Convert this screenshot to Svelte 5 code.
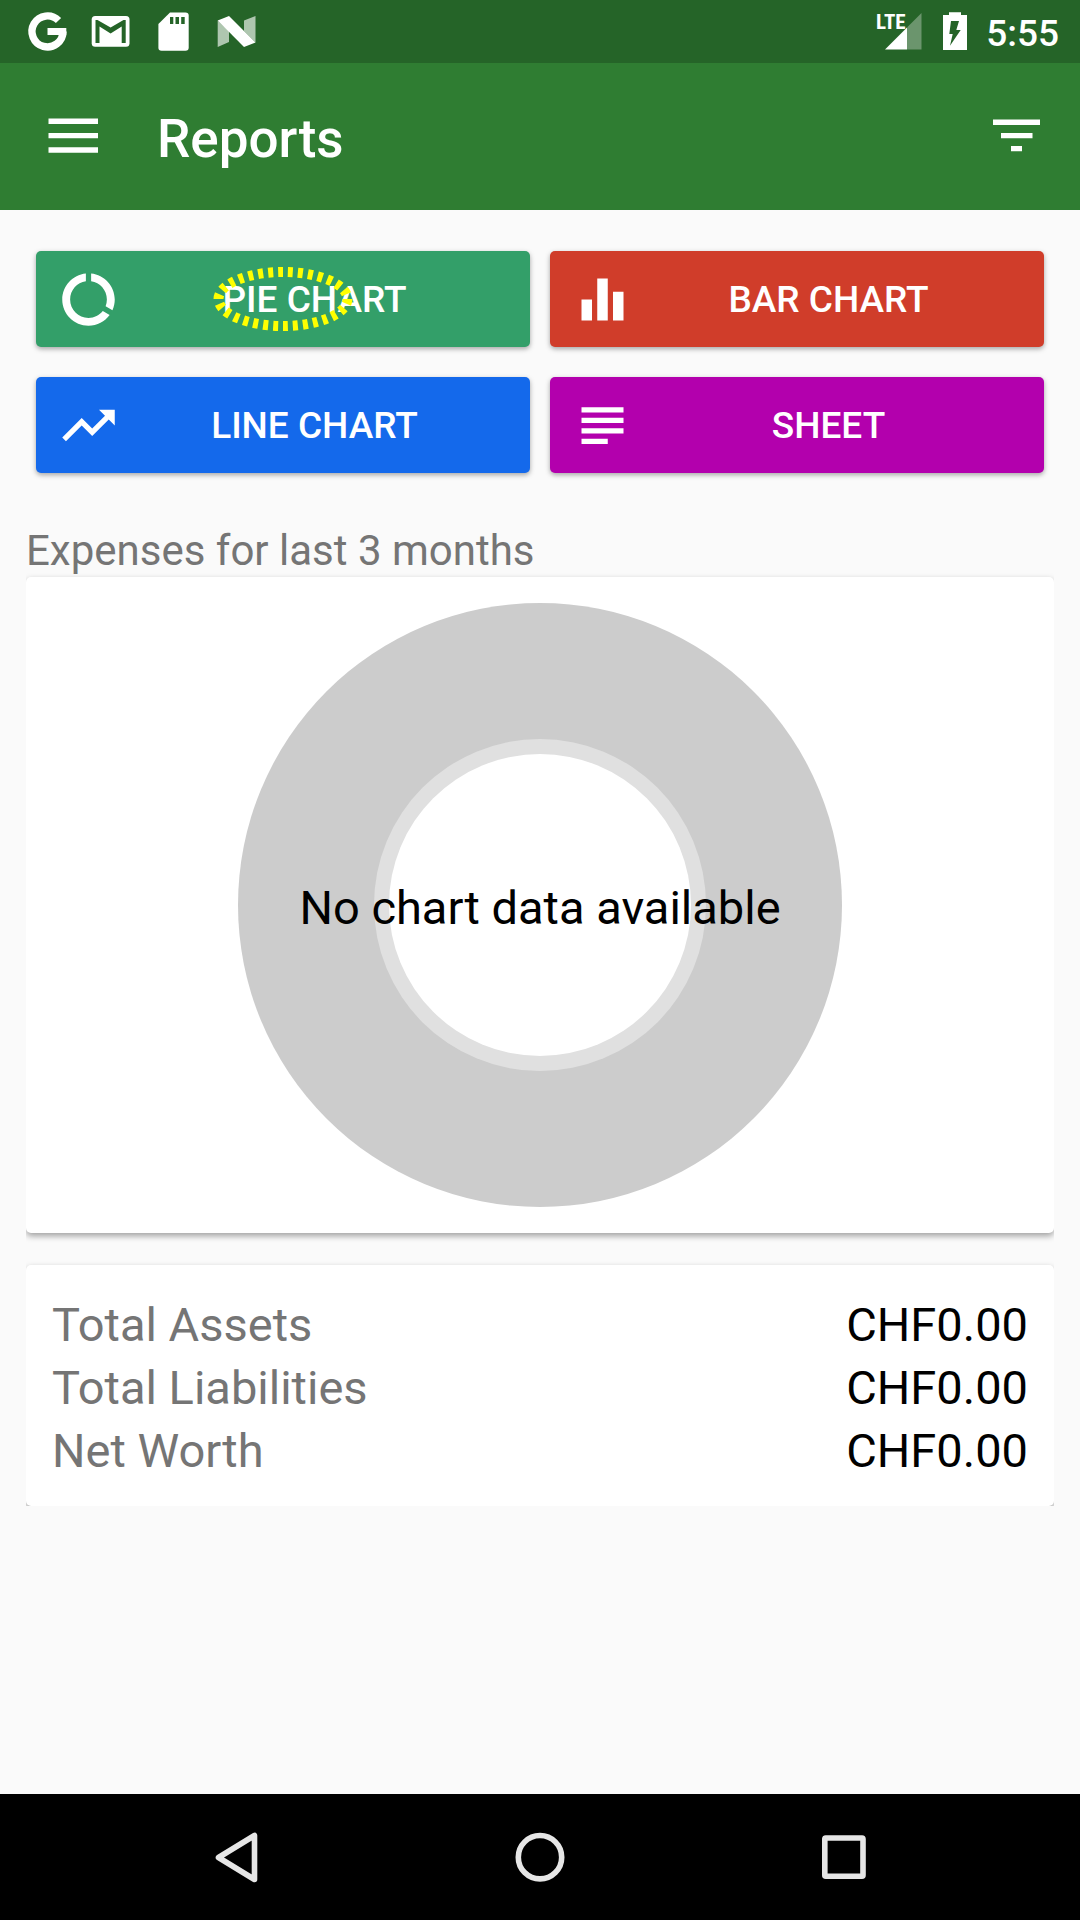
<script>
  const reports = [
    {
      label: 'PIE CHART',
      tone: 'green',
      marked: true,
      icon: 'M13 2.05v3.03c3.39.49 6 3.39 6 6.92 0 .9-.18 1.75-.48 2.54l2.6 1.53c.56-1.24.88-2.62.88-4.07 0-5.18-3.95-9.45-9-9.95zM12 19c-3.87 0-7-3.13-7-7 0-3.53 2.61-6.43 6-6.92V2.05c-5.06.5-9 4.76-9 9.95 0 5.52 4.47 10 9.99 10 3.31 0 6.24-1.61 8.06-4.09l-2.6-1.53C16.17 17.98 14.21 19 12 19z'
    },
    {
      label: 'BAR CHART',
      tone: 'red',
      icon: 'M10 20h4V4h-4v16zm-6 0h4v-8H4v8zM16 9v11h4V9h-4z'
    },
    {
      label: 'LINE CHART',
      tone: 'blue',
      icon: 'M16 6l2.29 2.29-4.88 4.88-4-4L2 16.59 3.41 18l6-6 4 4 6.3-6.29L22 12V6z'
    },
    {
      label: 'SHEET',
      tone: 'purple',
      icon: 'M14 17H4v2h10v-2zm6-8H4v2h16V9zM4 15h16v-2H4v2zM4 5v2h16V5H4z'
    }
  ];

  const totals = [
    { label: 'Total Assets', value: 'CHF0.00' },
    { label: 'Total Liabilities', value: 'CHF0.00' },
    { label: 'Net Worth', value: 'CHF0.00' }
  ];
</script>

<div class="screen">
  <div class="status">
    <div class="notifications">
      <svg class="box" viewBox="0 0 63 63" aria-hidden="true">
        <path d="M42.5 20.5A15.5 15.5 0 1 0 47 31.5" fill="none" stroke="#fff" stroke-width="7.4" />
        <path d="M31.5 28H50.3V35H31.5z" fill="#fff" />
      </svg>
      <svg class="box" viewBox="0 0 63 63" aria-hidden="true">
        <rect x="12.7" y="16" width="37.8" height="30.8" rx="3.5" fill="#fff" />
        <path
          d="M16.5 43V20H18.5L31.6 27.6 44.5 20H46.7V43H42.7V26.5L31.6 33.4 20.5 26.5V43z"
          fill="#256428"
        />
      </svg>
      <svg class="box" viewBox="0 0 63 63" aria-hidden="true">
        <path
          d="M28 12.5H43.5Q46.7 12.5 46.7 15.5V47.5Q46.7 50.7 43.5 50.7H19.5Q16.4 50.7 16.4 47.5V24z"
          fill="#fff"
        />
        <path d="M28 17h3.3v7H28zM33.5 17h3.5v7h-3.5zM39.2 17h3.5v7h-3.5z" fill="#256428" />
      </svg>
      <svg class="box" viewBox="0 0 63 63" aria-hidden="true">
        <path d="M12.7 20.5 24 31V42L12.7 47zM39 20.5 50.5 16V42.5L39 31z" fill="#fff" opacity=".63" />
        <path d="M12.7 20.5 24 16 50.5 42.5 39 47z" fill="#fff" />
      </svg>
    </div>
    <div class="system">
      <svg class="signal" viewBox="0 2 46 63" aria-label="LTE signal">
        <path d="M45.5 13V49.5H31V27.5z" fill="#fff" opacity=".32" />
        <path d="M31 27.5V49.5H9z" fill="#fff" />
        <text x="0" y="29">LTE</text>
      </svg>
      <svg class="battery" viewBox="0 2 24 63" aria-label="Battery charging">
        <path d="M6 12.2H18V15H24V50H0V15H6z" fill="#fff" />
        <path d="M8 21H16L13.3 30H17.7L7 45.7 9.7 34H6.3z" fill="#256428" />
      </svg>
      <span class="time">5:55</span>
    </div>
  </div>

  <header>
    <button class="plain" aria-label="Open navigation">
      <svg class="box" viewBox="0 2 63 63">
        <path d="M6.5 13.5h49.5v5.5h-49.5zM6.5 28h49.5v5.3h-49.5zM6.5 42.3h49.5v5.5h-49.5z" fill="#fff" />
      </svg>
    </button>
    <h1>Reports</h1>
    <button class="plain" aria-label="Filter">
      <svg class="box" viewBox="0 2 63 63">
        <path d="M8 14.5h47v5.5H8zM16 28h31.5v5.2H16zM26 41h11v5.3H26z" fill="#fff" />
      </svg>
    </button>
  </header>

  <main>
    <div class="reports">
      {#each reports as report}
        <button class="report {report.tone}">
          <svg class="box" viewBox="0 0 24 24" aria-hidden="true"><path d={report.icon} fill="#fff" /></svg>
          <span>{report.label}</span>
          {#if report.marked}
            <svg class="marker" viewBox="0 0 140 64" aria-hidden="true">
              <ellipse cx="70" cy="32" rx="64.5" ry="27" pathLength="300" />
            </svg>
          {/if}
        </button>
      {/each}
    </div>

    <h2>Expenses for last 3 months</h2>
    <section class="card chart">
      <svg viewBox="0 0 604 604">
        <circle cx="302" cy="302" r="302" fill="#ccc" />
        <circle cx="302" cy="302" r="166" fill="#e0e0e0" />
        <circle cx="302" cy="302" r="151" fill="#fff" />
        <text x="302" y="321" text-anchor="middle">No chart data available</text>
      </svg>
    </section>

    <section class="card summary">
      <table>
        <tbody>
          {#each totals as total}
            <tr>
              <th scope="row">{total.label}</th>
              <td>{total.value}</td>
            </tr>
          {/each}
        </tbody>
      </table>
    </section>
  </main>

  <nav>
    <button class="plain" aria-label="Back">
      <svg class="box" viewBox="0 0 63 63">
        <path d="M12.5 31.5 48.5 9.5V53.5z" />
      </svg>
    </button>
    <button class="plain" aria-label="Home">
      <svg class="box" viewBox="0 0 63 63">
        <circle cx="31" cy="31.2" r="21.7" />
      </svg>
    </button>
    <button class="plain" aria-label="Recent apps">
      <svg class="box" viewBox="0 0 63 63">
        <rect x="12.8" y="12" width="38.2" height="38.2" rx="1" />
      </svg>
    </button>
  </nav>
</div>

<style>
  :global(body) {
    margin: 0;
    background: #fafafa;
  }

  .screen {
    min-height: 100vh;
    display: flex;
    flex-direction: column;
    background: #fafafa;
    font-family: Roboto, 'Liberation Sans', sans-serif;
    color: #000;
  }

  svg {
    display: block;
    flex: none;
  }

  .box {
    width: 63px;
    height: 63px;
  }

  button {
    font: inherit;
    border: 0;
    margin: 0;
    cursor: pointer;
  }

  .plain {
    padding: 0;
    background: none;
  }

  .status {
    display: flex;
    justify-content: space-between;
    height: 63px;
    padding: 0 21px 0 16px;
    background: #256428;
    color: #fff;
  }

  .notifications,
  .system {
    display: flex;
    align-items: center;
  }

  .system {
    padding-top: 4px;
  }

  .signal {
    width: 46px;
    height: 63px;
    margin-right: 21px;
  }

  .signal text {
    font: bold 21px 'Liberation Sans Narrow', 'Roboto Condensed', Roboto, sans-serif;
    fill: #fff;
  }

  .battery {
    width: 24px;
    height: 63px;
    margin-right: 19px;
  }

  .time {
    font-size: 37px;
    font-weight: 500;
  }

  header {
    display: flex;
    align-items: center;
    box-sizing: border-box;
    height: 147px;
    padding: 4px 32px 0 42px;
    background: #2f7d32;
    color: #fff;
  }

  h1 {
    flex: 1;
    margin: 0 0 0 52px;
    font-size: 53px;
    font-weight: 500;
  }

  main {
    flex: 1;
    padding: 41px 26px 0;
  }

  .reports {
    display: grid;
    grid-template-columns: 1fr 1fr;
    gap: 30px 20px;
    padding: 0 10px;
  }

  .report {
    position: relative;
    display: flex;
    align-items: center;
    height: 96px;
    padding: 0 21px;
    border-radius: 5px;
    box-shadow: 0 2px 5px rgba(0, 0, 0, 0.34);
    color: #fff;
    font-size: 37px;
    font-weight: 500;
  }

  .report span {
    flex: 1;
    text-align: center;
  }

  .green {
    background: #339f69;
  }

  .red {
    background: #d03d2a;
  }

  .blue {
    background: #1469eb;
  }

  .purple {
    background: #b300ad;
  }

  .marker {
    position: absolute;
    left: 177px;
    top: 16px;
    width: 140px;
    height: 64px;
  }

  .marker ellipse {
    fill: none;
    stroke: #ff0;
    stroke-width: 10;
    stroke-dasharray: 5 5;
  }

  h2 {
    margin: 53px 0 2px;
    font-size: 42px;
    line-height: 49px;
    font-weight: 400;
    color: #757575;
  }

  .card {
    padding: 26px;
    border-radius: 5px;
    background: #fff;
    box-shadow: 0 3px 6px rgba(0, 0, 0, 0.36);
    clip-path: inset(-4px 0 -14px 0);
  }

  .chart {
    display: flex;
    justify-content: center;
    margin-bottom: 32px;
  }

  .chart svg {
    width: 604px;
    height: 604px;
  }

  .chart text {
    font-size: 47px;
  }

  .summary {
    padding: 28px 26px 24px;
    clip-path: inset(-4px 0 0 0);
  }

  table {
    width: 100%;
    border-collapse: collapse;
    font-size: 47px;
    line-height: 63px;
  }

  th,
  td {
    padding: 0;
    font-weight: 400;
  }

  th {
    text-align: left;
    color: #757575;
  }

  td {
    text-align: right;
  }

  nav {
    display: flex;
    justify-content: center;
    align-items: center;
    gap: 240px;
    height: 126px;
    background: #000;
  }

  nav svg {
    fill: none;
    stroke: #e6e6e6;
    stroke-width: 5.6;
    stroke-linejoin: round;
  }
</style>
